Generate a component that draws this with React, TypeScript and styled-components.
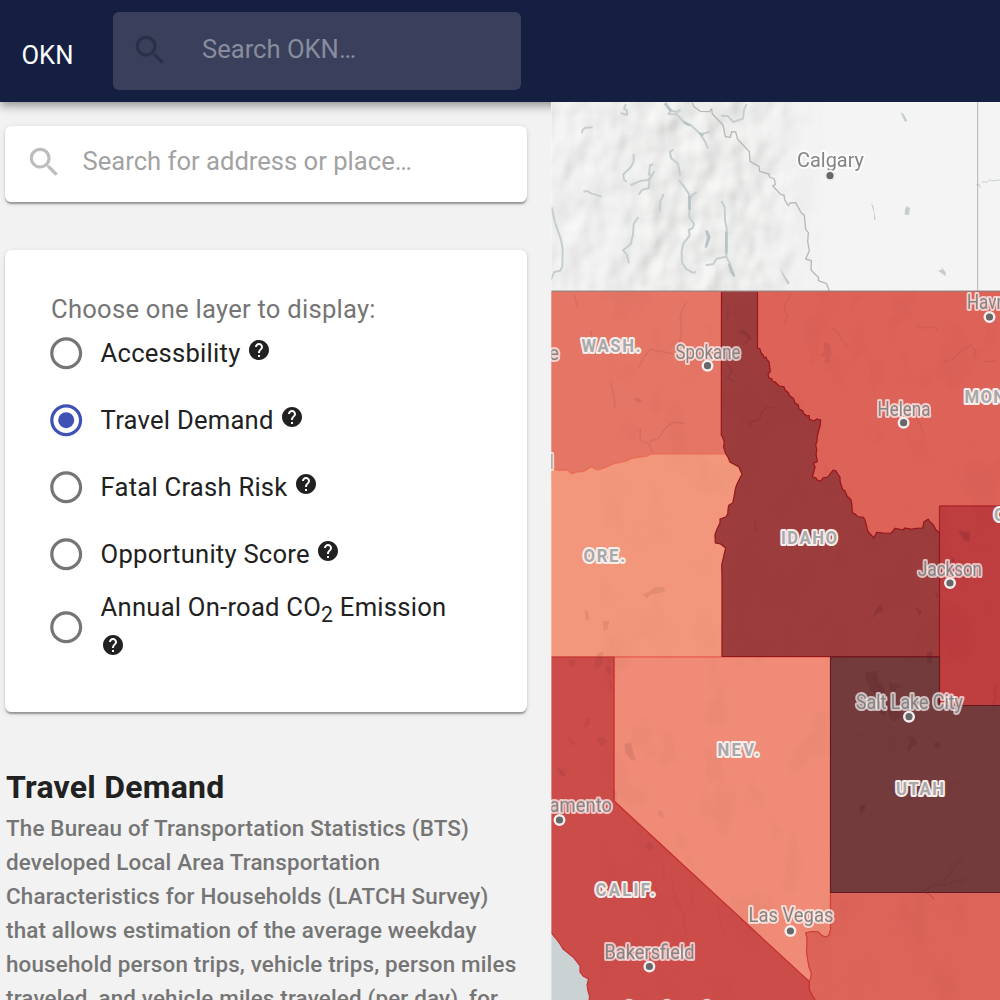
import React from "react";
import styled, { createGlobalStyle } from "styled-components";

const GlobalStyle = createGlobalStyle`
  *, *::before, *::after { box-sizing: border-box; }
  html, body { margin: 0; padding: 0; overflow: hidden; }
  body {
    font-family: Roboto, "Liberation Sans", sans-serif;
    background: #f2f2f2;
    color: rgba(0, 0, 0, 0.87);
    -webkit-font-smoothing: antialiased;
  }
`;

const Page = styled.div`
  width: 1000px;
  height: 1000px;
  display: flex;
  flex-direction: column;
  overflow: hidden;
`;

const AppBar = styled.header`
  position: relative;
  z-index: 1;
  flex: none;
  display: flex;
  align-items: center;
  height: 102px;
  padding-left: 21.5px;
  background: #151f42;
  box-shadow: 0 3.2px 6.4px -1.6px rgba(0, 0, 0, 0.2),
    0 6.4px 8px rgba(0, 0, 0, 0.14), 0 1.6px 16px rgba(0, 0, 0, 0.12);
`;

const Brand = styled.div`
  width: 91.5px;
  padding-top: 8px;
  font-size: 25.6px;
  line-height: 38px;
  color: #fff;
`;

const BarSearch = styled.div`
  display: flex;
  align-items: center;
  width: 408px;
  height: 78px;
  padding: 0 0 2px 17.6px;
  gap: 33px;
  border-radius: 6px;
  background: #3a405c;
  color: #2b3047;
`;

const Placeholder = styled.span<{ $tone: string; $lift: number }>`
  padding-bottom: ${(p) => p.$lift}px;
  font-size: 25.6px;
  line-height: 30px;
  white-space: nowrap;
  color: ${(p) => p.$tone};
`;

const Body = styled.div`
  flex: 1;
  display: flex;
  min-height: 0;
`;

const Sidebar = styled.aside`
  width: 551px;
  flex: none;
  padding: 24px 24px 0 5px;
  overflow: hidden;
`;

const Card = styled.section`
  border-radius: 6.4px;
  background: #fff;
  box-shadow: 0 3.2px 1.6px -1.6px rgba(0, 0, 0, 0.2),
    0 1.6px 1.6px rgba(0, 0, 0, 0.14), 0 1.6px 4.8px rgba(0, 0, 0, 0.12);
`;

const PlaceSearch = styled(Card)`
  display: flex;
  align-items: center;
  height: 76px;
  padding: 0 0 3px 19.6px;
  gap: 19.6px;
  color: #bdbdbd;
`;

const LayerCard = styled(Card)`
  height: 462px;
  margin-top: 48px;
  padding: 47px 46px 0;
`;

const Legend = styled.div`
  height: 22.5px;
  font-size: 25.6px;
  line-height: 25.6px;
  letter-spacing: 0.25px;
  white-space: nowrap;
  color: #757575;
`;

const Option = styled.label`
  display: flex;
  align-items: center;
  min-height: 67px;
  margin-left: -3.6px;
  padding-right: 30px;
  gap: 14.8px;
`;

const OptionText = styled.span`
  flex: 1;
  font-size: 25.6px;
  line-height: 1.5;
  letter-spacing: 0.24px;
  color: #212121;

  sub {
    font-size: 21.3px;
    line-height: 1.35;
    vertical-align: sub;
  }
`;

const Glyph = styled.svg<{ $size: number }>`
  flex: none;
  width: ${(p) => p.$size}px;
  height: ${(p) => p.$size}px;
  fill: currentColor;
`;

const RadioGlyph = styled(Glyph)<{ $on: boolean }>`
  color: ${(p) => (p.$on ? "#3f51b5" : "#757575")};
`;

const Title = styled.h2`
  margin: 54px 0 0 1px;
  font-size: 32px;
  line-height: 42px;
  font-weight: 700;
  letter-spacing: 0.24px;
  color: #212121;
`;

const Blurb = styled.p`
  margin: 3px -20px 0 1px;
  font-size: 22.4px;
  line-height: 34px;
  font-weight: 500;
  letter-spacing: 0.17px;
  white-space: nowrap;
  color: #757575;
`;

const MapPane = styled.main`
  position: relative;
  z-index: 2;
  width: 449px;
  flex: none;
  background: #f2f3f2;
`;

const MapCanvas = styled.svg`
  display: block;
  width: 449px;
  height: 898px;
`;

const City = styled.text`
  font: 400 19.6px Roboto, sans-serif;
  fill: #848484;
  stroke: rgba(255, 255, 255, 0.68);
  stroke-width: 4px;
  stroke-linejoin: round;
  paint-order: stroke;
`;

const StateName = styled.text`
  font: 700 18px Roboto, sans-serif;
  fill: #a9a9a9;
  stroke: #f8eeec;
  stroke-width: 4px;
  stroke-linejoin: round;
  paint-order: stroke;
`;

const SearchIcon = () => (
  <Glyph $size={38.4} viewBox="0 0 24 24">
    <path d="M15.5 14h-.79l-.28-.27C15.41 12.59 16 11.11 16 9.5 16 5.91 13.09 3 9.5 3S3 5.91 3 9.5 5.91 16 9.5 16c1.61 0 3.09-.59 4.23-1.57l.27.28v.79l5 4.99L20.49 19l-4.99-5zm-6 0C7.01 14 5 11.99 5 9.5S7.01 5 9.5 5 14 7.01 14 9.5 11.99 14 9.5 14z" />
  </Glyph>
);

const HelpIcon = () => (
  <Glyph $size={24} viewBox="0 0 24 24">
    <path d="M12 2C6.48 2 2 6.48 2 12s4.48 10 10 10 10-4.48 10-10S17.52 2 12 2zm1 17h-2v-2h2v2zm2.07-7.75-.9.92C13.45 12.9 13 13.5 13 15h-2v-.5c0-1.1.45-2.1 1.17-2.83l1.24-1.26c.37-.36.59-.86.59-1.41 0-1.1-.9-2-2-2s-2 .9-2 2H8c0-2.21 1.79-4 4-4s4 1.79 4 4c0 .88-.36 1.68-.93 2.25z" />
  </Glyph>
);

const Radio = ({ on }: { on: boolean }) => (
  <RadioGlyph $size={38.4} $on={on} viewBox="0 0 24 24">
    <path d="M12 2C6.48 2 2 6.48 2 12s4.48 10 10 10 10-4.48 10-10S17.52 2 12 2zm0 18c-4.42 0-8-3.58-8-8s3.58-8 8-8 8 3.58 8 8-3.58 8-8 8z" />
    {on && <circle cx="12" cy="12" r="5" />}
  </RadioGlyph>
);

const layers: { label: React.ReactNode; on?: boolean }[] = [
  { label: "Accessbility" },
  { label: "Travel Demand", on: true },
  { label: "Fatal Crash Risk" },
  { label: "Opportunity Score" },
  {
    label: (
      <>
        Annual On-road CO<sub>2</sub> Emission
      </>
    ),
  },
];

const WASH_ORE =
  "L725.7 453.7L652 454L645 456.7L637 457.5L630 459L626.7 461L613 464L604 468L598 470L595 469L591.7 466.7L583 471.7L577 472L571.7 473.7L567 470L560 470.5L551 469";
const SNAKE =
  "L721.3 435L722.5 437L724.3 441.7L723.6 447L725.7 453.7L728 457L730 462L735 464.7L739 467L740 470L742 474L740 478L737 484L735.3 489L734 497L732.7 503L729 505L728.3 507L727.7 514L725.7 517L720 519L720 523L717 529L715.5 533L715 535L715.3 543L720.7 544L725.7 548L724 555L721.7 565L722 577L722 656.5";
const BITTERROOT =
  "L757.5 348L760 349L761 353L763 355L764 358L766 357L767 360L769 361.7L770.3 371.7L768 374L769 378L772 379L772 381L775 382L779 386L784 386.7L785 390L788.3 392.7L789 395L791 397L793.3 398.3L795 403L798.3 405L799 409L803 411L803 413L806.7 416L809.3 415.5L809.3 419.3L814 421L817 419L820.7 420L820 426L818.3 431.7L817 438L817 441L815.7 445L816.8 450L816 454L817.3 461.7L813.3 463.3L815 467L814 471L812.3 476.7L816 478L817 480L820.7 481.3L823 478L828 477L830 474L833.3 470L836 471L837.7 474L840 477L840 481L842.3 489L845 491L847 496L851 500L851.7 503.3L852.3 512.7L855 514L857.7 516.7L863.3 517.3L865 520L866 524L867.7 530.7L869 533L871 535L874 538L876.7 532.3L883 533L891 533.3L895 528.3L903 530L905 528L911.7 529.3L915 528.5L922.7 528L924 521.7L928.3 519.3L930 522L933.3 525L936 530L939.5 532.7";
const COLORADO =
  "L829 935L826.7 937L823 936L820 934L818 931.7L812 931.5L805.7 932.7L807 938L807 943L806.5 951L807.7 960L809 967L811.3 973L811 977L809.3 981.7";

const reverse = (path: string) =>
  path
    .split("L")
    .filter(Boolean)
    .reverse()
    .map((p) => `L${p}`)
    .join("");

const regions = [
  { id: "wash", fill: "#e57565", line: "#dd5a48", d: `M551 291.5L721.3 291.5L721.3 435L724.3 441.7L723.6 447${WASH_ORE}Z` },
  { id: "mont", fill: "#dd6258", line: "#cf3f38", d: `M757.5 291.5${BITTERROOT}L939.5 506L1002 506L1002 291.5Z` },
  { id: "ore", fill: "#f2977b", line: "#ec6f52", d: `M725.7 453.7${WASH_ORE}L549 656.8L722 656.8L722 577L721.7 565L724 555L725.7 548L720.7 544L715.3 543L715 535L720 523L720 519L725.7 517L727.7 514L728.3 507L732.7 503L735.3 489L742 474L739 467L730 462Z` },
  { id: "nev", fill: "#ef8b76", line: "#e5594c", d: `M614 657L830.5 657L830.5 930${COLORADO}L614 801Z` },
  { id: "ariz", fill: "#dd6459", line: "#d33d36", d: `M830.5 892.5L830.5 930${COLORADO}L809.3 990L816 1002L1002 1002L1002 892.5Z` },
  { id: "calif", fill: "#cc4c4a", line: "#c42f2f", d: "M549 657L614 657L614 801L809.3 981.7L809.3 990L816 1002L589 1002L589.5 996L588 991L587 985L588.5 979L583 976L580 972L580 966L577 962L573 957L568 953L563 949L560 944L557 940L549 930Z" },
  { id: "wyo", fill: "#be3d3f", line: "#a51e25", d: "M939.5 506L1002 506L1002 705.5L939.5 705.5Z" },
  { id: "idaho", fill: "#9c3c3d", line: "#94151b", d: `M721.5 291.5${SNAKE}L939.5 656.5${reverse(BITTERROOT)}L757.5 291.5Z` },
  { id: "utah", fill: "#733b3c", line: "#631a20", d: "M830.5 657L939.5 657L939.5 705.5L1002 705.5L1002 892.5L830.5 892.5Z" },
];

const cities = [
  { name: "Calgary", x: 797, y: 167, w: 67, dot: [830, 175.7] },
  { name: "Havre", x: 967, y: 309, w: 44, dot: [989.5, 317] },
  { name: "Spokane", x: 675.5, y: 358.5, w: 65, dot: [707.5, 365.7] },
  { name: "Helena", x: 877.5, y: 415.5, w: 53, dot: [903.6, 422.7] },
  { name: "Jackson", x: 918, y: 575.5, w: 64, dot: [950, 583] },
  { name: "Salt Lake City", x: 856, y: 709, w: 107, dot: [909, 716.7] },
  { name: "Sacramento", x: 513, y: 811.5, w: 99, dot: [559.5, 820] },
  { name: "Las Vegas", x: 748.5, y: 922, w: 85, dot: [790.4, 931] },
  { name: "Bakersfield", x: 604.5, y: 958.5, w: 90, dot: [649.4, 966.5] },
  { name: "Seattle", x: 499, y: 360, w: 60, dot: null },
  { name: "Portland", x: 484, y: 469, w: 69.5, dot: null },
];

const stateNames = [
  { name: "WASH.", x: 581.5, y: 352, w: 59 },
  { name: "MONT.", x: 964.5, y: 403, w: 56 },
  { name: "ORE.", x: 583.5, y: 561.5, w: 41.5 },
  { name: "IDAHO", x: 781, y: 543.5, w: 56 },
  { name: "NEV.", x: 717.5, y: 756, w: 42 },
  { name: "UTAH", x: 896, y: 794.5, w: 48 },
  { name: "CALIF.", x: 595.5, y: 896, w: 59.5 },
  { name: "COLO.", x: 994, y: 521, w: 60 },
];

/* Glyphs are squeezed to this share of their width, the rest becomes tracking */
const CONDENSE = 0.93;

const BaseTerrain = () => (
  <g fill="none" strokeLinejoin="round">
    <rect x="551" y="102" width="449" height="190" fill="#f3f4f3" />
    <rect x="551" y="102" width="290" height="190" filter="url(#relief)" mask="url(#mountains)" />
    <g transform="translate(550 100) scale(.33333)" stroke="#c5cecf" strokeWidth="6">
      <path d="M228 12L222 26L231 32L231 45L212 39M95 100L98 90L106 83L128 82M100 275L112 273L125 281L155 290M251 162L251 184L243 201L220 223L222 240L231 245M310 193L300 196L297 224L304 228L294 240L275 242L243 254L255 252M313 213L298 240L297 264L277 269L266 284M341 282L331 304L329 334M345 10L365 31L355 42L380 43L405 69L422 75L452 103L480 95M363 32L382 36L392 28M453 106L465 124L474 146M371 149L360 154L363 174L384 191L391 226M387 241L401 258L418 283L418 351L432 372L428 384L416 390L419 407L401 429L395 452L396 487L408 507L428 518L438 516M440 276L425 287L418 302M265 350L251 372L249 405L242 432L229 443L219 451L230 463L237 490M5 322L15 367L33 419L38 446L37 499L31 512L13 516L3 539M513 47L533 48L550 66L579 56L582 29L590 12M514 303L524 320L525 361L530 384L529 470L539 490L542 516L554 530M467 496L490 492L500 476L528 470M469 392L473 412L467 444" />
      <path stroke="#b8c3c5" strokeWidth="8" d="M401 66L419 76M448 100L460 106M418 288L419 330M529 395L529 460M537 492L552 528M469 392L478 412L468 440M345 10L362 34" />
      <path stroke="#b8b8b6" strokeWidth="4" d="M427 8L432 20L451 34L479 35L485 26L487 42L519 75L526 110L541 112L545 95L557 96L563 118L598 155L600 184L627 199L629 214L657 222L659 231L673 237L676 253L668 258L675 265L693 284L702 285L704 300L715 317L720 309L737 308L754 339L763 346L767 388L775 398L773 425L778 452L767 477L784 482L783 510L806 533L805 542L830 551L838 573" />
    </g>
    <g transform="translate(775 100) scale(.33333)" fill="#c5cecf">
      <path d="M377 36L386 42L397 63L389 65ZM288 310L295 317L302 359L297 359L297 338ZM396 318L405 325L402 344L389 344L390 328ZM489 512L500 509L501 503L512 517L512 529ZM14 502L25 520L35 536L42 543L44 550L38 554L22 525Z" />
      <path fill="none" stroke="#c5cecf" strokeWidth="3" d="M604 254L612 253L616 263M621 246H638L645 238L650 243L675 240" />
      <path fill="none" stroke="#b5b6b6" strokeWidth="3" d="M608 6V573" />
    </g>
  </g>
);

/* Lakes, reservoirs and rivers showing through the tinted states */
const Hydrology = () => (
  <g fill="none" stroke="#5d2830" strokeWidth="4" strokeLinejoin="round">
    <g transform="translate(550 290) scale(.33333)">
      <path opacity=".11" d="M72 10L76 25L80 50M408 38L395 60L390 88L395 120L388 165M266 235L275 212L291 190L302 178L335 185L353 188L370 192M183 278L186 295L192 320L195 354M122 120L125 138M271 415V450L297 462L308 485M298 455L325 445L350 410L372 396L407 402" />
      <path opacity=".2" d="M533 50L535 70L529 90M565 125L590 130L600 145L580 165M535 225L545 245L532 262L553 275M672 355L650 352L635 368L628 390L600 395L602 410M615 690L620 728" />
      <path opacity=".12" fill="#5d2830" stroke="none" d="M250 328L262 321L278 335L268 339ZM565 122L580 120L600 138L606 148L590 145Z" />
    </g>
    <g transform="translate(775 290) scale(.33333)" opacity=".09">
      <path d="M47 15L30 42L27 60L38 75L28 104M170 115L185 122L197 145L217 170M426 108L450 114L480 110L487 120M505 216L535 207L560 180L588 165L600 180V203M622 215L665 213M422 385L435 402L445 434" />
      <path fill="#5d2830" stroke="none" d="M146 157L165 160L170 190L163 220L148 218L152 204L136 196L148 183Z" />
    </g>
    <g transform="translate(550 540) scale(.33333)" opacity=".1" fill="#5d2830" stroke="none">
      <path d="M278 162L295 157L315 142H340L346 153L325 160L305 162L290 176ZM104 208L115 218L117 242L106 236ZM160 244L178 243L173 267L160 274ZM143 338L160 336L156 377L138 388L135 365ZM168 374L183 382L181 407L168 395ZM56 359H76L73 382L60 377ZM178 413L190 447H180ZM110 534L121 538L115 557L100 564ZM140 597L158 591L173 604L155 622ZM54 588L67 603L76 610L75 617L60 610ZM223 612L243 608L251 638L258 662L243 660L226 640ZM18 678L33 688L52 690L35 694L48 708L30 704Z" />
    </g>
    <g transform="translate(775 530) scale(.33333)" opacity=".18" fill="#4a1820" stroke="none">
      <path d="M270 428L306 423L310 455L328 475L335 510L310 490L290 485L274 450ZM342 455L355 462L378 468L358 482L345 480ZM340 530L370 532L378 555L360 575L342 565ZM306 540L330 535L333 560ZM400 620L419 622L422 632L427 640L412 650L402 668L396 650L405 640ZM477 638L495 636L492 655L480 650ZM314 222L326 240L308 248L292 264L302 240ZM421 227L430 238L441 244L434 258ZM456 368L472 362L470 400L457 398ZM478 180L490 195L487 208ZM550 0L585 8L583 35L565 30ZM528 75L540 90L532 98Z" />
      <path fill="none" stroke="#4a1820" strokeWidth="4" opacity=".6" d="M668 462L658 480L662 500L655 520L660 535L645 540" />
    </g>
    <g transform="translate(775 770) scale(.33333)" opacity=".22">
      <path d="M562 245L560 265L540 282L530 308L515 320L505 345L480 342L465 355L438 365M578 326L560 335L538 332L515 345L495 342M448 365L466 375L478 388M522 290L525 308" />
      <path fill="#4a1820" stroke="none" d="M255 105H270L270 120L255 131Z" />
    </g>
    <g transform="translate(550 770) scale(.33333)" opacity=".09" fill="#5d2830" stroke="none">
      <path d="M285 224L300 218L312 230L300 240L286 233ZM326 120L338 128V146L324 135ZM190 55L200 65V92L190 90ZM25 3L48 5L40 20Z" />
      <path d="M360 290L375 360L405 430L412 510L402 480L395 430L372 400ZM425 345L435 420L420 390ZM500 390L530 500L510 470ZM340 260L348 335L336 310Z" opacity=".5" />
    </g>
  </g>
);

const StateMap = () => (
  <MapCanvas viewBox="551 102 449 898">
    <defs>
      <filter id="relief" x="0" y="0" width="100%" height="100%" colorInterpolationFilters="sRGB">
        <feTurbulence type="fractalNoise" baseFrequency="0.042 0.03" numOctaves="2" seed="7" />
        <feColorMatrix values="0 0 0 0 0  0 0 0 0 0  0 0 0 0 0  1 0 0 0 0" />
        <feDiffuseLighting surfaceScale="2.4" diffuseConstant="1.08" lightingColor="#efefee">
          <feDistantLight azimuth="225" elevation="64" />
        </feDiffuseLighting>
      </filter>
      <filter id="tint-relief" x="0" y="0" width="100%" height="100%" colorInterpolationFilters="sRGB">
        <feTurbulence type="fractalNoise" baseFrequency="0.03 0.018" numOctaves="3" seed="12" />
        <feColorMatrix values="0 0 0 0 0.2  0 0 0 0 0.1  0 0 0 0 0.1  1.6 0 0 0 -0.85" />
      </filter>
      <linearGradient id="mountain-fade" x1="551" x2="841" y1="0" y2="0" gradientUnits="userSpaceOnUse">
        <stop offset="0" stopColor="#777" />
        <stop offset=".2" stopColor="#777" />
        <stop offset=".4" stopColor="#bbb" />
        <stop offset=".7" stopColor="#aaa" />
        <stop offset=".95" stopColor="#000" />
      </linearGradient>
      <mask id="mountains" maskUnits="userSpaceOnUse" x="551" y="102" width="290" height="190">
        <rect x="551" y="102" width="290" height="190" fill="url(#mountain-fade)" />
      </mask>
    </defs>
    <BaseTerrain />
    <rect x="551" y="900" width="60" height="100" fill="#cad2d3" />
    {regions.map((r) => (
      <path key={r.id} d={r.d} fill={r.fill} stroke={r.line} strokeWidth="1.1" strokeLinejoin="round" />
    ))}
    <rect x="600" y="292" width="400" height="708" filter="url(#tint-relief)" opacity=".05" />
    <path d="M551 291.2H1000" stroke="#9a8a88" strokeWidth="1.2" />
    <Hydrology />
    {stateNames.map((s) => (
      <StateName
        key={s.name}
        transform={`translate(${s.x} ${s.y}) scale(${CONDENSE} 1)`}
        textLength={s.w / CONDENSE}
      >
        {s.name}
      </StateName>
    ))}
    {cities.map((c) => (
      <g key={c.name}>
        <City x={c.x} y={c.y} textLength={c.w} lengthAdjust="spacingAndGlyphs">
          {c.name}
        </City>
        {c.dot && (
          <circle cx={c.dot[0]} cy={c.dot[1]} r="4.8" fill="#686868" stroke="#f4efee" strokeWidth="2.4" />
        )}
      </g>
    ))}
    <path d="M625 1000q4-2.4 8 0zM663 1000q4-2.4 8 0zM703 1000q4-2.4 8 0z" fill="#eccfcd" />
    <path d="M551.5 102V1000" stroke="#fff" strokeOpacity=".35" />
  </MapCanvas>
);

export default function App() {
  return (
    <Page>
      <GlobalStyle />
      <AppBar>
        <Brand>OKN</Brand>
        <BarSearch>
          <SearchIcon />
          <Placeholder $tone="#888c9d" $lift={2}>
            Search OKN…
          </Placeholder>
        </BarSearch>
      </AppBar>
      <Body>
        <Sidebar>
          <PlaceSearch>
            <SearchIcon />
            <Placeholder $tone="#a2a2a2" $lift={3.4}>
              Search for address or place…
            </Placeholder>
          </PlaceSearch>
          <LayerCard>
            <Legend>Choose one layer to display:</Legend>
            {layers.map((layer, i) => (
              <Option key={i}>
                <Radio on={!!layer.on} />
                <OptionText>
                  {layer.label} <HelpIcon />
                </OptionText>
              </Option>
            ))}
          </LayerCard>
          <Title>Travel Demand</Title>
          <Blurb>
            The Bureau of Transportation Statistics (BTS)
            <br />
            developed Local Area Transportation
            <br />
            Characteristics for Households (LATCH Survey)
            <br />
            that allows estimation of the average weekday
            <br />
            household person trips, vehicle trips, person miles
            <br />
            traveled, and vehicle miles traveled (per day), for
          </Blurb>
        </Sidebar>
        <MapPane>
          <StateMap />
        </MapPane>
      </Body>
    </Page>
  );
}
